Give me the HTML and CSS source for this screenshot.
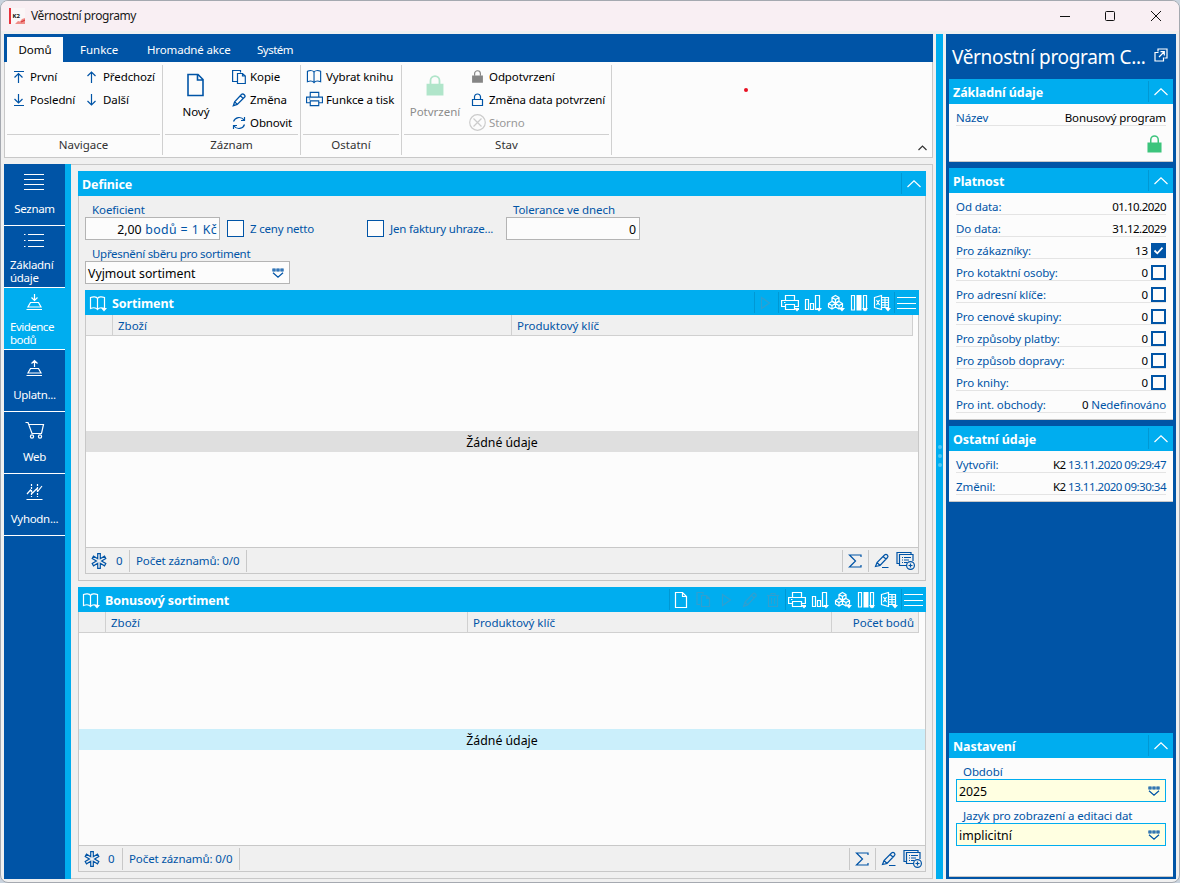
FILE: index.html
```
<!DOCTYPE html>
<html lang="cs">
<head>
<meta charset="utf-8">
<title>Věrnostní programy</title>
<link rel="stylesheet" href="styles.css">
</head>
<body>
<svg class="defs" width="0" height="0">
  <symbol id="book" viewBox="0 0 18 18"><path d="M8.500 4.500C7.500 2.500 4 2.500 1.500 3.500V14.500C4 13.500 7 13.500 8.500 15.500C10 13.500 13 13.500 15.500 14.500V3.500C13 2.500 9.500 2.500 8.500 4.500V15"/></symbol>
  <symbol id="printer" viewBox="0 0 18 18"><path d="M4.500 6V1.500H13.500V6M4 12.500H.6V6.500H17.400V12.500H14M4.500 10.500H13.500V15.500H4.500ZM3 8.500H4.500"/></symbol>
  <symbol id="page" viewBox="0 0 18 18"><path d="M3.500 1.500H10.500L14.500 5.500V16.500H3.500ZM10.500 1.500V5.500H14.500"/></symbol>
  <symbol id="copy" viewBox="0 0 18 18"><path d="M5 13.500H2V1.500H8V3.500M6.500 4.500H11.500L14.500 7.500V15.500H6.500ZM11.500 4.500V7.500H14.500"/></symbol>
  <symbol id="pen" viewBox="0 0 18 18"><path d="M2.500 15.500L4 11L12 2.500Q13 1.500 14.500 3T14.500 5.500L6.500 14ZM4 11L6.500 14M10.500 4L13 7"/></symbol>
  <symbol id="play" viewBox="0 0 18 18"><path d="M4.500 3.500L12.500 9L4.500 14.500Z"/></symbol>
  <symbol id="trash" viewBox="0 0 18 18"><path d="M3 4.500H15M4.500 4.500V15.500H13.500V4.500M7 4V2.500H11V4M7.500 7V13M10.500 7V13"/></symbol>
  <symbol id="chart" viewBox="0 0 18 18"><path d="M1.500 5.500H4.500V15.500H1.500ZM6.500 9.500H9.500V15.500H6.500ZM11.500 1.500H15.500V15.500H11.500Z"/></symbol>
  <symbol id="cubes" viewBox="0 0 18 18"><path d="M8.500 1.500L12 3.500V7L8.500 9L5 7V3.500ZM5 3.500L8.500 5.500L12 3.500M8.500 5.500V9M5 7.500L8.500 9.500V13L5 15L1.500 13V9.500ZM1.500 9.500L5 11.500L8.500 9.500M5 11.500V15M12 7.500L15.500 9.500V13L12 15L8.500 13V9.500ZM8.500 9.500L12 11.500L15.500 9.500M12 11.500V15"/></symbol>
  <symbol id="columns" viewBox="0 0 18 18"><path d="M1.500 1.500H4.500V16H1.500ZM13.500 1.500H16.500V16H13.500Z"/><path d="M6.500 1H11.500V16.500H6.500Z" fill="currentColor" stroke="none"/></symbol>
  <symbol id="excel" viewBox="0 0 18 18"><path d="M1.500 3.500L8.500 1.500V15.500L1.500 13.500ZM3.500 6L6.500 11M6.500 6L3.500 11M8.500 3.500H15.500V13.500H8.500M12 3.500V13.500M8.500 6H15.500M8.500 8.500H15.500M8.500 11H15.500"/></symbol>
  <symbol id="drop" viewBox="0 0 6 4"><path d="M0 0H6L3 3.500Z" fill="currentColor" stroke="none"/></symbol>
  <symbol id="burger" viewBox="0 0 19 14"><path d="M0 1.500H19M0 7.500H19M0 12.500H19"/></symbol>
  <symbol id="chev" viewBox="0 0 14 8"><path d="M.5 7L7 .8L13.500 7"/></symbol>
  <symbol id="pick" viewBox="0 0 12 11"><path d="M1 1H3V3H1ZM5 1H7V3H5ZM9 1H11V3H9ZM1 4.800L6 9.300L11 4.800"/></symbol>
  <symbol id="lock" viewBox="0 0 16 18"><path d="M4 8V5A4 4 0 0 1 12 5V8" fill="none" stroke-width="1.600"/><path d="M.5 7.500H15.500V17.500H.5Z" fill="currentColor" stroke="none"/></symbol>
  <symbol id="star" viewBox="0 0 16 16"><path d="M6.700 .7H9.300V5.700L13.500 3.200L14.800 5.500L10.600 8L14.800 10.500L13.500 12.800L9.300 10.300V15.300H6.700V10.300L2.500 12.800L1.200 10.500L5.400 8L1.200 5.500L2.500 3.200L6.700 5.700Z"/></symbol>
  <symbol id="sum" viewBox="0 0 14 14"><path d="M13 3V1H1.500L7.500 7L1.500 13H13V11"/></symbol>
  <symbol id="edit" viewBox="0 0 16 16"><path d="M1.500 13.500L3 9.500L10.500 2Q12 .8 13.300 2T13.500 4.500L6 12.500ZM3 9.500L6 12.500M9 3.500L12 6M8 14.500H14.500"/></symbol>
  <symbol id="addlist" viewBox="0 0 19 19"><path d="M3 12.500H1V1.500H15V3M11 14.500H3.500V3.500H17V10M6 6.500H7M8 6.500H15M6 9H7M8 9H13M6 11.500H7M8 11.500H11"/><circle cx="14.500" cy="14.500" r="3.900"/><path d="M14.500 12.500V16.500M12.500 14.500H16.500"/></symbol>
</svg>

<div class="window">
  <header class="titlebar">
    <svg class="logo" width="16" height="16" viewBox="0 0 16 16"><rect width="16" height="16" fill="#fbf6f7"/><rect width="2" height="16" fill="#e8323c"/><path d="M6 16L9 13L11 13.500L13 11L16 10V16Z" fill="#f08c88"/><path d="M12 14L16 12" stroke="#d83a3c"/><text x="3.500" y="10" class="logo-text">K2</text></svg>
    <span class="caption">Věrnostní programy</span>
    <svg class="winbtns" width="104" height="14" viewBox="0 0 104 14"><path d="M1 7.500H11M46.500 3.500Q46.500 2.500 47.500 2.500H54.500Q55.500 2.500 55.500 3.500V10.500Q55.500 11.500 54.500 11.500H47.500Q46.500 11.500 46.500 10.500ZM92 2L102 12M102 2L92 12"/></svg>
  </header>

  <div class="app">
    <div class="left">
      <nav class="tabs"><span class="tab active">Domů</span><span class="tab t2">Funkce</span><span class="tab t3">Hromadné akce</span><span class="tab t4">Systém</span></nav>
      <section class="ribbon">
        <div class="group g1">
          <div class="cmds">
            <div class="col c1">
              <div class="cmd"><svg width="14" height="14" viewBox="0 0 14 14"><path d="M2 1.500H12M6.500 13V3.500M2.500 7.500L6.500 3.500L10.500 7.500"/></svg>První</div>
              <div class="cmd"><svg width="14" height="14" viewBox="0 0 14 14"><path d="M2 12.500H12M6.500 1V10M2.500 6L6.500 10L10.500 6"/></svg>Poslední</div>
            </div>
            <div class="col">
              <div class="cmd"><svg width="14" height="14" viewBox="0 0 14 14"><path d="M6.500 13V2M2.500 6L6.500 2L10.500 6"/></svg>Předchozí</div>
              <div class="cmd"><svg width="14" height="14" viewBox="0 0 14 14"><path d="M6.500 1V12M2.500 8L6.500 12L10.500 8"/></svg>Další</div>
            </div>
          </div>
          <div class="gname">Navigace</div>
        </div>
        <div class="group g2">
          <div class="cmds">
            <div class="big new"><svg width="18" height="24" viewBox="0 0 18 24"><path d="M1 1.500H11L16 6.500V22.500H1ZM10.500 1.500V7H16" stroke-width="1.600"/></svg>Nový</div>
            <div class="col">
              <div class="cmd"><svg width="14" height="16" viewBox="0 0 14 16"><path d="M5 12.500H.6V1.500H8.500V3.500M5.500 4.500H10.500L13.300 7V14.500H5.500ZM10.500 4.500V7H13"/></svg>Kopie</div>
              <div class="cmd"><svg width="14" height="14" viewBox="0 0 16 16"><path d="M1.500 14.500L3 10L11 1.500Q12.500 .5 14 2T14.500 4.500L6 13ZM3 10L6 13M9.500 3L12.500 6" stroke-width="1.500"/></svg>Změna</div>
              <div class="cmd"><svg width="14" height="14" viewBox="0 0 14 14"><path d="M1.500 5.500C3 1 9 0 12 4M12.500 1V4.500H9M12.500 8.500C11 13 5 14 2 10M1.500 13V9.500H5"/></svg>Obnovit</div>
            </div>
          </div>
          <div class="gname">Záznam</div>
        </div>
        <div class="group g3">
          <div class="cmds">
            <div class="col">
              <div class="cmd"><svg width="17" height="17"><use href="#book"/></svg>Vybrat knihu</div>
              <div class="cmd"><svg width="17" height="17"><use href="#printer"/></svg>Funkce a tisk</div>
            </div>
          </div>
          <div class="gname">Ostatní</div>
        </div>
        <div class="group g4">
          <div class="cmds">
            <div class="big confirm"><svg width="18" height="21" viewBox="0 0 16 18" preserveAspectRatio="none"><use href="#lock" width="16" height="18"/></svg>Potvrzení</div>
            <div class="col">
              <div class="cmd"><svg class="grey" width="17" height="13"><use href="#lock"/></svg>Odpotvrzení</div>
              <div class="cmd"><svg width="17" height="14" viewBox="0 0 17 14"><path d="M3.500 6.500H13.500V12.500H3.500ZM5.500 6.500V3.500Q6 1 8.500 1T11.500 3.500V6.500"/></svg>Změna data potvrzení</div>
              <div class="cmd off"><svg width="17" height="17" viewBox="0 0 17 17"><circle cx="8.500" cy="8.500" r="7.800"/><path d="M4.500 4.500L12.500 12.500M12.500 4.500L4.500 12.500"/></svg>Storno</div>
            </div>
          </div>
          <div class="gname">Stav</div>
        </div>
        <svg class="collapse" width="9" height="6" viewBox="0 0 9 6"><path d="M.5 5L4.500 1L8.500 5"/></svg>
        <i class="reddot"></i>
      </section>

      <div class="work">
        <aside class="side">
          <div class="item"><svg width="22" height="18" viewBox="0 0 22 18"><path d="M0 1.500H20M0 6.500H20M0 11.500H20M0 16.500H20"/></svg><span>Seznam</span></div>
          <div class="item two"><svg width="22" height="18" viewBox="0 0 22 18"><path d="M0 3.500H1.500M4 3.500H20M0 9.500H1.500M4 9.500H20M0 15.500H1.500M4 15.500H20"/></svg><span>Základní údaje</span></div>
          <div class="item two on"><svg width="18" height="18" viewBox="0 0 18 18"><path d="M8.500 1V7M5.500 4.500L8.500 7.500L11.500 4.500M4.500 9.500H12.500L15 14H2ZM.5 16.500H16"/></svg><span>Evidence bodů</span></div>
          <div class="item"><svg width="18" height="18" viewBox="0 0 18 18"><path d="M8.500 8V2M5.500 4.500L8.500 1.500L11.500 4.500M4.500 9.500H12.500L15 14H2ZM.5 16.500H16"/></svg><span>Uplatn...</span></div>
          <div class="item"><svg width="20" height="18" viewBox="0 0 20 18"><path d="M.5 1.500H3L7 12.500H16.500L18.500 3.500H4"/><circle cx="7" cy="15.500" r="1.600"/><circle cx="15" cy="15.500" r="1.600"/></svg><span>Web</span></div>
          <div class="item"><svg width="18" height="18" viewBox="0 0 18 18"><path d="M.5 16.500H16.500M1 11L4.500 7L6.500 10L10.500 6L12 8L16 3"/><path d="M5.500 1V14M11.500 1V14" stroke-dasharray="2 1"/></svg><span>Vyhodn...</span></div>
        </aside>

        <main class="content">
          <section class="panel def">
            <div class="phead"><b>Definice</b><span class="chevbox"><svg width="14" height="8"><use href="#chev"/></svg></span></div>
            <div class="pbody">
              <div class="frow">
                <div class="field f135"><label>Koeficient</label><div class="input num coef"><em>2,00</em>&nbsp;bodů = 1 Kč</div></div>
                <div class="check"><i></i>Z ceny netto</div>
                <div class="check"><i></i>Jen faktury uhraze...</div>
                <div class="field f134"><label>Tolerance ve dnech</label><div class="input num"><em>0</em></div></div>
              </div>
              <div class="field f205"><label>Upřesnění sběru pro sortiment</label><div class="input sel"><em>Vyjmout sortiment</em><svg width="12" height="11"><use href="#pick"/></svg></div></div>

              <div class="table t-sort">
                <div class="phead"><svg class="bk" width="18" height="18"><use href="#book"/><use href="#drop" x="12" y="14" width="6" height="4"/></svg><b>Sortiment</b>
                  <span class="tools">
                    <span class="tool sep dim"><svg width="18" height="18"><use href="#play"/></svg></span>
                    <span class="tool sep"><svg width="18" height="18"><use href="#printer"/><use href="#drop" x="13" y="14" width="6" height="4"/></svg></span>
                    <span class="tool"><svg width="18" height="18"><use href="#chart"/><use href="#drop" x="12" y="14" width="6" height="4"/></svg></span>
                    <span class="tool"><svg width="18" height="18"><use href="#cubes"/><use href="#drop" x="12" y="14" width="6" height="4"/></svg></span>
                    <span class="tool"><svg width="18" height="18"><use href="#columns"/><use href="#drop" x="12" y="14" width="6" height="4"/></svg></span>
                    <span class="tool"><svg width="18" height="18"><use href="#excel"/><use href="#drop" x="12" y="14" width="6" height="4"/></svg></span>
                    <span class="tool sep wide"><svg width="19" height="14"><use href="#burger"/></svg></span>
                  </span></div>
                <div class="grid">
                  <div class="cols"><span></span><span>Zboží</span><span>Produktový klíč</span></div>
                  <div class="none">Žádné údaje</div>
                </div>
                <div class="foot"><span class="cell cnt"><svg width="16" height="16"><use href="#star"/></svg>0</span><span class="cell rec">Počet záznamů: 0/0</span><span class="cell sum"><svg width="14" height="14"><use href="#sum"/></svg></span><span class="cell acts"><svg width="16" height="16"><use href="#edit"/></svg><svg width="19" height="19"><use href="#addlist"/></svg></span></div>
              </div>
            </div>
          </section>

          <section class="table t-bonus">
            <div class="phead"><svg class="bk" width="18" height="18"><use href="#book"/><use href="#drop" x="12" y="14" width="6" height="4"/></svg><b>Bonusový sortiment</b>
              <span class="tools">
                <span class="tool sep"><svg width="18" height="18"><use href="#page"/></svg></span>
                <span class="tool dim"><svg width="18" height="18"><use href="#copy"/></svg></span>
                <span class="tool dim"><svg width="18" height="18"><use href="#play"/></svg></span>
                <span class="tool dim"><svg width="18" height="18"><use href="#pen"/></svg></span>
                <span class="tool dim"><svg width="18" height="18"><use href="#trash"/></svg></span>
                <span class="tool sep"><svg width="18" height="18"><use href="#printer"/><use href="#drop" x="13" y="14" width="6" height="4"/></svg></span>
                <span class="tool"><svg width="18" height="18"><use href="#chart"/><use href="#drop" x="12" y="14" width="6" height="4"/></svg></span>
                <span class="tool"><svg width="18" height="18"><use href="#cubes"/><use href="#drop" x="12" y="14" width="6" height="4"/></svg></span>
                <span class="tool"><svg width="18" height="18"><use href="#columns"/><use href="#drop" x="12" y="14" width="6" height="4"/></svg></span>
                <span class="tool"><svg width="18" height="18"><use href="#excel"/><use href="#drop" x="12" y="14" width="6" height="4"/></svg></span>
                <span class="tool sep wide"><svg width="19" height="14"><use href="#burger"/></svg></span>
              </span></div>
            <div class="grid">
              <div class="cols"><span></span><span>Zboží</span><span>Produktový klíč</span><span class="r">Počet bodů</span></div>
              <div class="none">Žádné údaje</div>
            </div>
            <div class="foot"><span class="cell cnt"><svg width="16" height="16"><use href="#star"/></svg>0</span><span class="cell rec">Počet záznamů: 0/0</span><span class="cell sum"><svg width="14" height="14"><use href="#sum"/></svg></span><span class="cell acts"><svg width="16" height="16"><use href="#edit"/></svg><svg width="19" height="19"><use href="#addlist"/></svg></span></div>
          </section>
        </main>
      </div>
    </div>

    <div class="splitter"><i></i><i></i><i></i></div>

    <aside class="info">
      <h1>Věrnostní program C...<svg width="14" height="14" viewBox="0 0 14 14"><path d="M4 3.500V1H13V10H10.500M4.500 4.500H1V13H9.500V9.500M5 9L10 4M6.500 3.700H10.300V7.500"/></svg></h1>
      <section class="card basic">
        <div class="phead"><b>Základní údaje</b><span class="chevbox"><svg width="14" height="8"><use href="#chev"/></svg></span></div>
        <div class="row">Název<span><em>Bonusový program</em></span></div>
        <svg class="green" width="15" height="18" viewBox="0 0 16 18" preserveAspectRatio="none"><use href="#lock" width="16" height="18"/></svg>
      </section>
      <section class="card valid">
        <div class="phead"><b>Platnost</b><span class="chevbox"><svg width="14" height="8"><use href="#chev"/></svg></span></div>
        <div class="row">Od data:<span class="date"><em>01.10.2020</em></span></div>
        <div class="row">Do data:<span class="date"><em>31.12.2029</em></span></div>
        <div class="row">Pro zákazníky:<span><em>13</em><i class="box full"><svg width="11" height="9" viewBox="0 0 11 9"><path d="M1.500 4.500L4.300 7.300L9.500 1.700"/></svg></i></span></div>
        <div class="row">Pro kotaktní osoby:<span><em>0</em><i class="box"></i></span></div>
        <div class="row">Pro adresní klíče:<span><em>0</em><i class="box"></i></span></div>
        <div class="row">Pro cenové skupiny:<span><em>0</em><i class="box"></i></span></div>
        <div class="row">Pro způsoby platby:<span><em>0</em><i class="box"></i></span></div>
        <div class="row">Pro způsob dopravy:<span><em>0</em><i class="box"></i></span></div>
        <div class="row">Pro knihy:<span><em>0</em><i class="box"></i></span></div>
        <div class="row">Pro int. obchody:<span><em>0</em>&nbsp;Nedefinováno</span></div>
      </section>
      <section class="card other">
        <div class="phead"><b>Ostatní údaje</b><span class="chevbox"><svg width="14" height="8"><use href="#chev"/></svg></span></div>
        <div class="row">Vytvořil:<span class="date"><em>K2</em>&nbsp;13.11.2020 09:29:47</span></div>
        <div class="row">Změnil:<span class="date"><em>K2</em>&nbsp;13.11.2020 09:30:34</span></div>
      </section>
      <section class="card settings">
        <div class="phead"><b>Nastavení</b><span class="chevbox"><svg width="14" height="8"><use href="#chev"/></svg></span></div>
        <div class="sbody">
          <div class="field"><label>Období</label><div class="input sel"><em>2025</em><svg width="12" height="11"><use href="#pick"/></svg></div></div>
          <div class="field"><label>Jazyk pro zobrazení a editaci dat</label><div class="input sel"><em>implicitní</em><svg width="12" height="11"><use href="#pick"/></svg></div></div>
        </div>
      </section>
    </aside>
  </div>
</div>
</body>
</html>
```

FILE: styles.css
```
* { box-sizing: border-box; }
body { margin: 0; background: #c9d3de; font: 11.5px/14px "Noto Sans", "Open Sans", sans-serif; letter-spacing: -.1px; color: #0054a6; overflow: hidden; }
svg { display: block; flex: none; fill: none; stroke: currentColor; stroke-width: 1.2; }
.defs { position: absolute; }
em { font-style: normal; color: #000; }
b { padding-top: 2px; font-size: 12.5px; }

.window { width: 1180px; height: 883px; border: 1px solid #a5a9b0; border-radius: 8px; background: #f0f0f0; overflow: hidden; }
.titlebar { display: flex; align-items: center; height: 30px; padding: 0 16px 0 8px; background: #f9eff3; color: #1a1a1a; }
.logo { stroke: none; }
.logo-text { font: bold 6px "Noto Sans", sans-serif; fill: #111; }
.caption { margin-left: 6px; font-size: 12px; letter-spacing: -.42px; }
.winbtns { margin-left: auto; stroke: #111; stroke-width: 1; }
.app { display: flex; height: 845px; margin: 3px 3px 0; }
.left { width: 929px; display: flex; flex-direction: column; }

.tabs { display: flex; height: 28px; padding: 3px 0 0 3px; background: #0054a6; color: #fff; line-height: 26px; letter-spacing: 0; }
.tab.active { width: 56px; background: #fcfcfc; color: #000; text-align: center; }
.t2 { margin-left: 17px; width: 67px; }
.t3 { width: 110px; letter-spacing: -.15px; }
.t4 { letter-spacing: -.5px; }
.tab { white-space: nowrap; }

.ribbon { position: relative; display: flex; height: 96px; background: #fcfcfc; border: 1px solid #c8c8c8; border-top: 0; color: #000; }
.group { height: 90px; margin-top: 3px; border-right: 1px solid #d0d0d0; display: flex; flex-direction: column; }
.g1 { width: 158px; } .g2 { width: 138px; } .g3 { width: 101px; } .g4 { width: 210px; }
.cmds { display: flex; height: 70px; margin: 0 2px; border-bottom: 1px solid #d0d0d0; }
.gname { text-align: center; line-height: 20px; color: #333; letter-spacing: 0; }
.cmd { display: flex; align-items: center; height: 23px; gap: 4px; white-space: nowrap; }
.cmd svg, .new svg { color: #0054a6; }
.g1 .col { padding-left: 5px; }
.g1 .c1 { width: 73px; }
.big { display: flex; flex-direction: column; align-items: center; padding-top: 8px; gap: 8px; letter-spacing: 0; }
.new { width: 62px; margin-right: 5px; }
.confirm { width: 62px; margin-right: 3px; padding-top: 10px; gap: 9px; color: #8c8c8c; }
.confirm svg { color: #b0e5ca; }
.g3 .col { padding-left: 3px; }
.g3 .cmd { gap: 3px; }
.cmd .grey { color: #858585; }
.g4 .cmd { gap: 3px; }
.off, .off svg { color: #999; }
.off svg { color: #ccc; }
.collapse { position: absolute; right: 5px; bottom: 6px; color: #333; }
.reddot { position: absolute; left: 739px; top: 26px; width: 4px; height: 4px; border-radius: 50%; background: #e81123; }

.work { display: flex; height: 715px; margin-top: 6px; }
.side { width: 67px; background: #0054a6; border-right: 6px solid #00adef; color: #fff; }
.item { display: flex; flex-direction: column; align-items: center; height: 62px; padding-top: 9px; border-bottom: 1px solid #fff; }
.item span { margin-top: 11px; white-space: nowrap; line-height: 14px; letter-spacing: -.3px; }
.item.two { padding-top: 5px; }
.item.two span { width: 49px; margin-top: 9px; white-space: normal; line-height: 13px; }
.item.on span { letter-spacing: -.5px; }
.item.on { background: #00adef; }

.content { width: 862px; border: 1px solid #c8c8c8; border-left: 0; padding: 6px 6px 6px 7px; }
.phead { display: flex; align-items: center; height: 25px; padding-left: 4px; background: #00adef; color: #fff; flex: none; }
.chevbox { display: flex; align-items: center; justify-content: center; width: 25px; height: 21px; margin-left: auto; padding-right: 1px; border-left: 1px solid #0098d4; }
.def { width: 848px; height: 410px; margin-bottom: 6px; }
.pbody { height: 385px; padding: 7px 6px 6px; border: 1px solid #c4c4c4; border-top: 0; }
.frow { display: flex; }
.field label { display: block; height: 14px; padding-left: 7px; white-space: nowrap; }
.f135 { width: 135px; margin-right: 7px; } .f134 { width: 134px; } .f205 { width: 205px; margin-top: 7px; }
.f205 label { letter-spacing: -.3px; }
.input { display: flex; align-items: center; height: 23px; padding: 2px 3px 0 2px; border: 1px solid #b4b4b4; background: #fcfcfc; font-size: 12.3px; letter-spacing: 0; white-space: nowrap; }
.input svg { margin-right: 2px; }
.num { justify-content: flex-end; }
.coef { letter-spacing: .4px; padding-right: 2px; }
.coef em { letter-spacing: 0; }
.sel { justify-content: space-between; }
.check { display: flex; align-items: center; width: 140px; height: 17px; margin-top: 17px; gap: 6px; white-space: nowrap; letter-spacing: -.2px; }
.check + .check { width: 139px; }
.check i { width: 17px; height: 17px; border: 1px solid #0054a6; background: #fcfcfc; }

.table { display: flex; flex-direction: column; }
.t-sort { height: 284px; margin-top: 6px; }
.t-bonus { width: 848px; height: 285px; }
.bk { margin-right: 5px; }
.tools { display: flex; margin-left: auto; }
.tool { display: flex; align-items: center; justify-content: center; width: 23px; height: 21px; padding-right: 1px; }
.sep { width: 24px; border-left: 1px solid #0098d4; }
.wide { width: 25px; padding-right: 2px; }
.dim svg { color: #2f9fd0; }
.grid { flex: 1; background: #fcfcfc; border: 1px solid #c8c8c8; border-top: 0; }
.cols { display: grid; width: 827px; height: 21px; grid-template-columns: 27px 399px 401px; background: #f0f0f0; border-bottom: 1px solid #d0d0d0; letter-spacing: 0; }
.t-bonus .cols { width: 840px; grid-template-columns: 27px 362px 364px 87px; }
.cols span { padding-left: 5px; border-right: 1px solid #d0d0d0; line-height: 21px; }
.cols .r { text-align: right; padding: 0 4px 0 0; }
.none { height: 21px; margin-top: 95px; background: #dfdfdf; color: #000; text-align: center; font-size: 12.3px; line-height: 23px; letter-spacing: 0; }
.t-bonus .none { margin-top: 96px; background: #cbeffb; }
.foot { display: flex; align-items: center; height: 26px; border: 1px solid #c8c8c8; border-top: 0; flex: none; }
.cell { display: flex; align-items: center; height: 22px; border-right: 1px solid #c8c8c8; white-space: nowrap; }
.cnt { width: 44px; padding-left: 5px; gap: 9px; }
.t-bonus .cnt { gap: 8px; }
.rec { width: 117px; padding-left: 6px; }
.sum { margin-left: auto; border: solid #c8c8c8; border-width: 0 1px; width: 27px; padding-right: 2px; justify-content: center; }
.acts { width: 49px; padding-left: 5px; gap: 6px; border: 0; }

.splitter { display: flex; flex-direction: column; align-items: center; justify-content: center; gap: 5px; width: 7px; margin: 0 3px; padding-bottom: 2px; background: #00adef; }
.splitter i { width: 4px; height: 4px; border-radius: 50%; background: #4fc6f3; }
.info { display: flex; flex-direction: column; width: 230px; padding: 0 3px 2px; background: #0054a6; }
h1 { display: flex; align-items: center; justify-content: space-between; height: 45px; margin: 0; padding: 0 5px 0 3px; color: #fff; font-size: 19px; font-weight: 400; letter-spacing: -.33px; white-space: nowrap; }
h1 svg { margin-bottom: 4px; }
.card { background: #fcfcfc; border-bottom: 1px solid #c8c8c8; margin-bottom: 6px; }
.basic { height: 83px; } .valid { height: 252px; } .other { height: 76px; }
.settings { height: 144px; margin: auto 0 0; }
.row { display: flex; justify-content: space-between; height: 22px; margin: 0 7px; padding-top: 7px; border-bottom: 1px solid #e4e4e4; white-space: nowrap; }
.row span { display: flex; }
.row .date { letter-spacing: -.5px; }
.box { width: 15px; height: 15px; margin: -1px 0 0 3px; border: 2px solid #0054a6; background: #fcfcfc; }
.full { background: #0054a6; color: #fff; }
.full svg { stroke-width: 1.8; margin-top: 1px; }
.green { color: #3cc47c; margin: 9px 11px 0 auto; }
.sbody { padding: 7px 7px 0; }
.sbody .field { margin-bottom: 7px; }
.sbody .input { border-color: #00adef; background: #ffffe1; }
```
